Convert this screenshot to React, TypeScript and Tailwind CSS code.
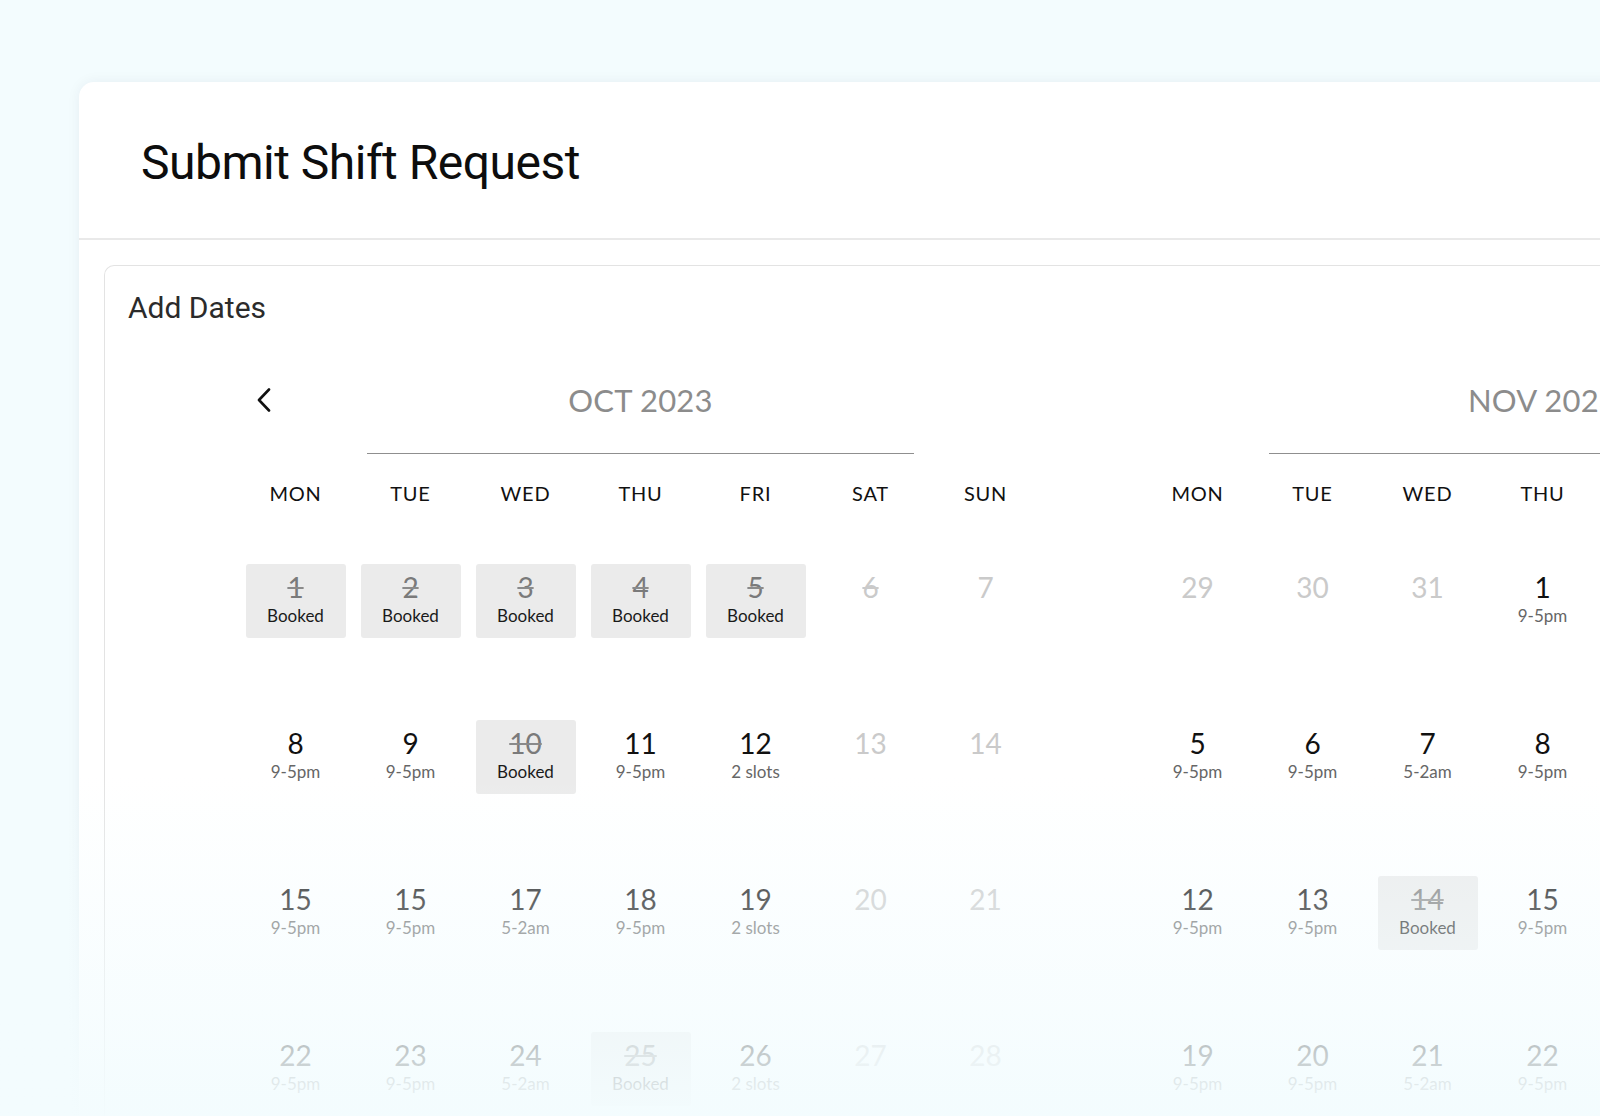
import React from 'react';

type Day = {
  n: string;
  sub?: string;
  kind: 'open' | 'booked' | 'off';
  strike?: boolean;
};

const DAYS = ['MON', 'TUE', 'WED', 'THU', 'FRI', 'SAT', 'SUN'];

const o = (n: string, sub: string): Day => ({ n, sub, kind: 'open' });
const b = (n: string): Day => ({ n, sub: 'Booked', kind: 'booked' });
const x = (n: string, strike = false): Day => ({ n, kind: 'off', strike });

const october: Day[][] = [
  [b('1'), b('2'), b('3'), b('4'), b('5'), x('6', true), x('7')],
  [o('8', '9-5pm'), o('9', '9-5pm'), b('10'), o('11', '9-5pm'), o('12', '2 slots'), x('13'), x('14')],
  [o('15', '9-5pm'), o('15', '9-5pm'), o('17', '5-2am'), o('18', '9-5pm'), o('19', '2 slots'), x('20'), x('21')],
  [o('22', '9-5pm'), o('23', '9-5pm'), o('24', '5-2am'), b('25'), o('26', '2 slots'), x('27'), x('28')],
];

const november: Day[][] = [
  [x('29'), x('30'), x('31'), o('1', '9-5pm'), o('2', '9-5pm'), x('3'), x('4')],
  [o('5', '9-5pm'), o('6', '9-5pm'), o('7', '5-2am'), o('8', '9-5pm'), o('9', '9-5pm'), x('10'), x('11')],
  [o('12', '9-5pm'), o('13', '9-5pm'), b('14'), o('15', '9-5pm'), o('16', '2 slots'), x('17'), x('18')],
  [o('19', '9-5pm'), o('20', '9-5pm'), o('21', '5-2am'), o('22', '9-5pm'), o('23', '9-5pm'), x('24'), x('25')],
];

const Chevron = ({ dir }: { dir: 'left' | 'right' }) => (
  <svg width="14" height="24" viewBox="0 0 14 24" fill="none">
    <polyline
      points={dir === 'left' ? '12,1.5 2,12 12,22.5' : '2,1.5 12,12 2,22.5'}
      stroke="#111"
      strokeWidth="2.6"
      strokeLinecap="round"
      strokeLinejoin="round"
    />
  </svg>
);

const Cell = ({ d }: { d: Day }) => {
  if (d.kind === 'booked') {
    return (
      <div className="w-[100px] h-[74px] rounded-[3px] bg-[#ebebeb] flex flex-col items-center pt-[9px]">
        <span className="text-[28px] leading-[28px] text-[#7a7a7a] line-through decoration-[#8a8a8a]">{d.n}</span>
        <span className="mt-[4px] text-[17px] leading-[22px] text-[#1a1a1a]">{d.sub}</span>
      </div>
    );
  }
  if (d.kind === 'off') {
    return (
      <div className="w-[100px] h-[74px] flex flex-col items-center pt-[9px]">
        <span className={`text-[28px] leading-[28px] text-[#cacaca] ${d.strike ? 'line-through' : ''}`}>{d.n}</span>
      </div>
    );
  }
  return (
    <div className="w-[100px] h-[74px] flex flex-col items-center pt-[9px]">
      <span className="text-[28px] leading-[28px] text-[#111]">{d.n}</span>
      <span className="mt-[4px] text-[17px] leading-[22px] text-[#666]">{d.sub}</span>
    </div>
  );
};

const Month = ({ title, rows, nav }: { title: string; rows: Day[][]; nav: 'left' | 'right' }) => (
  <div className="w-[805px] shrink-0">
    <div className="grid grid-cols-[repeat(7,115px)] h-[52px] items-center">
      <div className="pl-[19px] flex items-center">{nav === 'left' && <Chevron dir="left" />}</div>
      <div className="col-span-5 text-center text-[31px] text-[#8c8c8c] tracking-[0.2px]">{title}</div>
      <div className="flex items-center justify-end pr-[19px]">{nav === 'right' && <Chevron dir="right" />}</div>
    </div>
    <div className="grid grid-cols-[repeat(7,115px)] mt-[27px]">
      <div className="col-start-2 col-span-5 mx-[14px] h-px bg-[#8f8f8f]" />
    </div>
    <div className="grid grid-cols-[repeat(7,115px)] mt-[27px] h-[24px] items-center">
      {DAYS.map((d) => (
        <div key={d} className="text-center text-[20px] leading-[24px] tracking-[0.8px] text-[#111]">
          {d}
        </div>
      ))}
    </div>
    <div className="mt-[59px] flex flex-col gap-[82px]">
      {rows.map((r, i) => (
        <div key={i} className="grid grid-cols-[repeat(7,115px)] justify-items-center">
          {r.map((d, j) => (
            <Cell key={j} d={d} />
          ))}
        </div>
      ))}
    </div>
  </div>
);

export default function App() {
  return (
    <div className="relative w-full h-[1116px] overflow-hidden bg-[#f3fcfe] pt-[82px] pl-[79px]">
      <div className="w-[1560px] h-[1100px] bg-white rounded-tl-[15px] shadow-[0_0_14px_rgba(0,40,60,0.06)]">
        <div className="h-[158px] border-b-2 border-[#e9e9e9] pl-[62px] pt-[53px]">
          <h1 className="text-[48px] leading-[56px] text-[#0d0d0d] font-normal tracking-[-0.5px] font-['Roboto',sans-serif]">
            Submit Shift Request
          </h1>
        </div>
        <div className="pl-[25px] pt-[25px]">
          <div className="border border-r-0 border-[#e3e3e3] rounded-tl-[10px] h-[900px] font-['Lato',sans-serif]">
            <div className="pl-[23px] pt-[24px] text-[30px] leading-[36px] text-[#2b2b2b] font-['Roboto',sans-serif]">
              Add Dates
            </div>
            <div className="flex gap-[97px] pl-[133px] mt-[48px]">
              <Month title="OCT 2023" rows={october} nav="left" />
              <Month title="NOV 2023" rows={november} nav="right" />
            </div>
          </div>
        </div>
      </div>
      <div className="pointer-events-none absolute inset-x-0 bottom-0 h-[340px] bg-linear-to-b from-[rgba(243,252,254,0)] to-[rgba(243,252,254,0.97)]" />
    </div>
  );
}
